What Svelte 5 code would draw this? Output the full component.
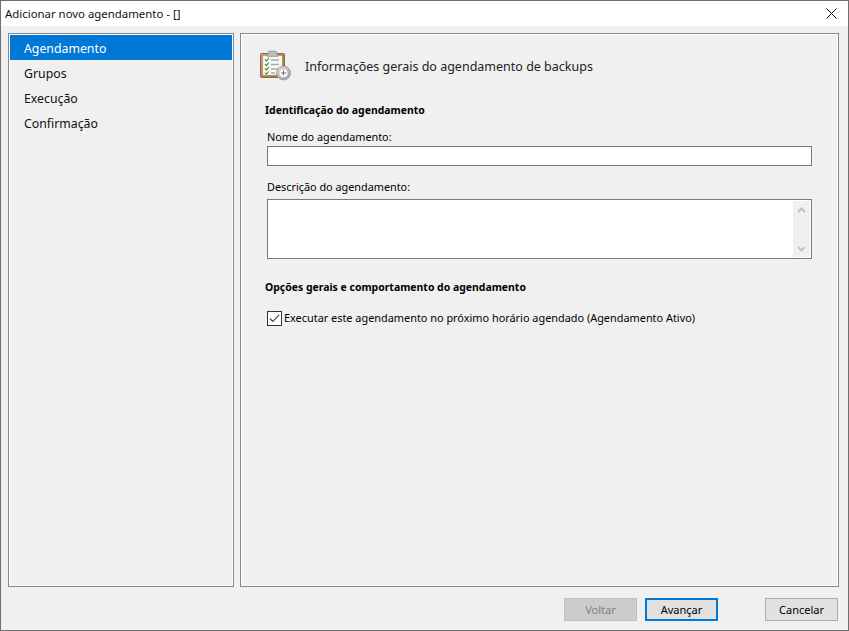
<script>
  const steps = ['Agendamento', 'Grupos', 'Execução', 'Confirmação'];
  let active = 0;
  let name = '';
  let description = '';
  let enabled = true;
</script>

<div class="window">
  <header class="titlebar">
    <span class="title">Adicionar novo agendamento - []</span>
    <svg class="close" width="11" height="11" viewBox="0 0 11 11" aria-hidden="true">
      <path d="M0.5 0.5 L10.5 10.5 M10.5 0.5 L0.5 10.5" stroke="#111" stroke-width="1" fill="none" />
    </svg>
  </header>

  <div class="content">
    <nav class="sidebar">
      {#each steps as step, i}
        <div class="step" class:active={i === active}>{step}</div>
      {/each}
    </nav>

    <main class="panel">
      <div class="panel-head">
        <svg class="clip" width="31" height="31" viewBox="0 0 31 31" aria-hidden="true">
          <defs>
            <linearGradient id="board" x1="0" y1="0" x2="1" y2="1">
              <stop offset="0" stop-color="#c99a68" />
              <stop offset="1" stop-color="#9c6b3c" />
            </linearGradient>
            <radialGradient id="ring" cx="0.4" cy="0.35" r="0.8">
              <stop offset="0" stop-color="#f2f2f2" />
              <stop offset="1" stop-color="#8f9296" />
            </radialGradient>
          </defs>
          <rect x="0.5" y="3.5" width="24" height="24" rx="1" fill="url(#board)" stroke="#8e6a45" />
          <rect x="3" y="6" width="19" height="19" fill="#f8f8f6" stroke="#ddd8cf" stroke-width="0.5" />
          <path d="M8 4 V2.5 Q8 1 9.5 1 H15.5 Q17 1 17 2.5 V4 L18 6.5 H7 Z" fill="#b7babe" stroke="#93969a" stroke-width="0.7" />
          <path d="M5 9.5 l1.5 1.5 l2.5 -3 M5 14 l1.5 1.5 l2.5 -3 M5 18.5 l1.5 1.5 l2.5 -3 M5 23 l1.5 1 l2 -2.5" stroke="#3f8a1e" stroke-width="1.1" fill="none" />
          <path d="M11 10 h8 M11 14.5 h8 M11 19 h7 M11 23 h4" stroke="#a5a8ad" stroke-width="1.3" fill="none" />
          <circle cx="23.5" cy="23" r="7" fill="url(#ring)" stroke="#8f9296" stroke-width="0.7" />
          <circle cx="23.5" cy="23" r="4.6" fill="#fdfdfd" stroke="#a0a2a6" stroke-width="0.7" />
          <path d="M23.5 20 v3 h3 M23.5 23 v2.5 M21 23 h2.5" stroke="#555" stroke-width="0.8" fill="none" />
        </svg>
        <h1>Informações gerais do agendamento de backups</h1>
      </div>

      <h2>Identificação do agendamento</h2>

      <label class="field-label" for="sched-name">Nome do agendamento:</label>
      <input id="sched-name" class="text-input" type="text" bind:value={name} />

      <label class="field-label second" for="sched-desc">Descrição do agendamento:</label>
      <div class="memo">
        <textarea id="sched-desc" bind:value={description}></textarea>
        <div class="scrollbar">
          <svg width="9" height="6" viewBox="0 0 9 6" aria-hidden="true">
            <path d="M1 5 L4.5 1.5 L8 5" stroke="#c4c4c4" stroke-width="2" fill="none" />
          </svg>
          <svg width="9" height="6" viewBox="0 0 9 6" aria-hidden="true">
            <path d="M1 1 L4.5 4.5 L8 1" stroke="#c4c4c4" stroke-width="2" fill="none" />
          </svg>
        </div>
      </div>

      <h2 class="options">Opções gerais e comportamento do agendamento</h2>

      <label class="check">
        <input type="checkbox" bind:checked={enabled} />
        <span class="box">
          {#if enabled}
            <svg width="11" height="9" viewBox="0 0 11 9" aria-hidden="true">
              <path d="M0.8 4.5 L3.8 7.5 L10.2 0.8" stroke="#444" stroke-width="1.1" fill="none" />
            </svg>
          {/if}
        </span>
        <span class="check-text">Executar este agendamento no próximo horário agendado (Agendamento Ativo)</span>
      </label>
    </main>
  </div>

  <footer class="actions">
    <button disabled>Voltar</button>
    <button class="primary">Avançar</button>
    <button class="cancel">Cancelar</button>
  </footer>
</div>

<style>
  :global(body) {
    background: #6b6b6b;
  }

  .window {
    width: 847px;
    height: 629px;
    display: flex;
    flex-direction: column;
    background: #f0f0f0;
    border: 1px solid #6f6f6f;
    font-family: "Noto Sans", "Open Sans", sans-serif;
    font-size: 11px;
    color: #000;
  }

  .titlebar {
    height: 25px;
    flex: none;
    display: flex;
    align-items: center;
    justify-content: space-between;
    padding: 0 11px 0 4px;
    background: #fff;
  }

  .title {
    font-size: 11.4px;
    color: #111;
  }

  .content {
    height: 554px;
    margin-top: 7px;
    padding: 0 9px 0 7px;
    display: flex;
    gap: 6px;
  }

  .sidebar {
    width: 222px;
    flex: none;
    padding: 1px;
    border: 1px solid #828790;
    box-shadow: inset 0 0 0 1px #fff;
  }

  .step {
    height: 25px;
    padding-left: 14px;
    line-height: 27px;
    font-size: 12.3px;
    color: #111;
  }

  .step.active {
    background: #0078d7;
    color: #fff;
  }

  .panel {
    flex: 1;
    min-width: 0;
    padding: 0 26px 0 24px;
    border: 1px solid #828790;
    box-shadow: inset 0 0 0 1px #fff;
  }

  .panel-head {
    height: 63px;
    display: flex;
    align-items: center;
    gap: 14px;
    margin-left: -5px;
  }

  .clip {
    flex: none;
  }

  h1 {
    margin: 0;
    padding-top: 2px;
    font-size: 12.5px;
    font-weight: 400;
    color: #222;
  }

  h2 {
    margin: 5px 0 0;
    font-size: 10.45px;
    font-weight: 700;
    line-height: 16px;
    color: #000;
  }

  h2.options {
    margin-top: 20px;
  }

  .field-label {
    display: block;
    margin: 11px 0 0 2px;
    font-size: 10.85px;
    line-height: 16px;
    color: #000;
  }

  .field-label.second {
    margin-top: 13px;
  }

  .text-input {
    display: block;
    width: 545px;
    height: 20px;
    margin: 1px 0 0 2px;
    padding: 0 3px;
    box-sizing: border-box;
    border: 1px solid #7a7a7a;
    background: #fff;
    outline: none;
  }

  .memo {
    width: 545px;
    height: 60px;
    margin: 4px 0 0 2px;
    box-sizing: border-box;
    display: flex;
    padding: 1px;
    border: 1px solid #7a7a7a;
    background: #fff;
  }

  textarea {
    flex: 1;
    border: 0;
    outline: none;
    resize: none;
    padding: 2px;
    font: inherit;
  }

  .scrollbar {
    width: 17px;
    flex: none;
    display: flex;
    flex-direction: column;
    align-items: center;
    justify-content: space-between;
    padding: 6px 0 5px;
    box-sizing: border-box;
    background: #f0f0f0;
  }

  .check {
    display: flex;
    align-items: center;
    gap: 2px;
    margin: 15px 0 0 2px;
    line-height: 16px;
    color: #000;
  }

  .check input {
    display: none;
  }

  .check-text {
    font-size: 10.9px;
  }

  .box {
    width: 13px;
    height: 13px;
    flex: none;
    display: flex;
    align-items: center;
    justify-content: center;
    border: 1px solid #333;
    background: #fff;
  }

  .actions {
    flex: 1;
    display: flex;
    align-items: flex-start;
    padding: 11px 10px 0 0;
    justify-content: flex-end;
  }

  button {
    width: 73px;
    height: 23px;
    box-sizing: border-box;
    padding: 0;
    border: 1px solid #adadad;
    background: #e1e1e1;
    font: inherit;
    color: #000;
  }

  button:disabled {
    margin-right: 8px;
    background: #ccc;
    border-color: #bfbfbf;
    color: #838383;
  }

  .primary {
    border: 2px solid #0078d7;
  }

  .cancel {
    margin-left: 47px;
  }
</style>
